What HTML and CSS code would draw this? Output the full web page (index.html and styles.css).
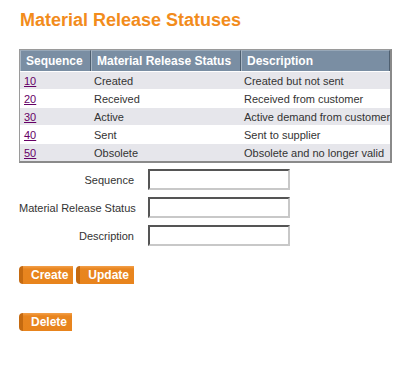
FILE: index.html
```html
<!DOCTYPE html>
<html lang="en">
<head>
  <meta charset="UTF-8">
  <title>Material Release Statuses</title>
  <link rel="stylesheet" href="styles.css">
</head>
<body>

<div class="page">
  <h1 class="title">Material Release Statuses</h1>

  <table class="grid">
    <thead>
      <tr>
        <th class="col-seq">Sequence</th>
        <th class="col-status">Material Release Status</th>
        <th class="col-desc">Description</th>
      </tr>
    </thead>
    <tbody>
      <tr class="odd"><td><a href="#">10</a></td><td>Created</td><td>Created but not sent</td></tr>
      <tr><td><a href="#">20</a></td><td>Received</td><td>Received from customer</td></tr>
      <tr class="odd"><td><a href="#">30</a></td><td>Active</td><td>Active demand from customer</td></tr>
      <tr><td><a href="#">40</a></td><td>Sent</td><td>Sent to supplier</td></tr>
      <tr class="odd"><td><a href="#">50</a></td><td>Obsolete</td><td>Obsolete and no longer valid</td></tr>
    </tbody>
  </table>

  <form class="edit-form">
    <div class="field">
      <label>Sequence</label>
      <input type="text">
    </div>
    <div class="field">
      <label>Material Release Status</label>
      <input type="text">
    </div>
    <div class="field">
      <label>Description</label>
      <input type="text">
    </div>
  </form>

  <div class="actions">
    <button class="btn">Create</button>
    <button class="btn">Update</button>
  </div>

  <div class="actions actions-delete">
    <button class="btn">Delete</button>
  </div>
</div>

</body>
</html>
```

FILE: styles.css
```css
body {
  margin: 0;
  background-color: #fff;
  color: #333;
  font-family: "Liberation Sans", Arial, sans-serif;
  font-size: 11px;
}

.page {
  padding: 10px 0 0 19px;
}

.title {
  margin: 0 0 19px 1px;
  font-size: 18px;
  line-height: 20px;
  font-weight: bold;
  color: #f28c1c;
}

.grid {
  width: 373px;
  table-layout: fixed;
  border-collapse: separate;
  border-spacing: 0;
  border: 1px solid #9a9a9a;
  border-right: 2px solid #8a8a8a;
  border-bottom: 2px solid #8a8a8a;
}

.grid th {
  height: 20px;
  padding: 0 5px;
  text-align: left;
  white-space: nowrap;
  font-size: 12px;
  font-weight: bold;
  color: #fff;
  background-color: #7a8ea3;
  border-left: 1px solid #a8b6c4;
  border-right: 1px solid #4e5f70;
  border-top: 1px solid #98a8b8;
}

.grid th.col-seq { width: 59px; }
.grid th.col-status { width: 138px; }

.grid td {
  height: 17px;
  padding: 0 1px 0 3px;
  white-space: nowrap;
  overflow: hidden;
  color: #333;
  border-top: 1px solid #fff;
}

.grid td:first-child { padding-left: 4px; }

.grid tr.odd td {
  background-color: #e6e6eb;
}

.grid a {
  color: #660066;
}

.edit-form {
  margin-top: 6px;
}

.field {
  display: flex;
  align-items: center;
  height: 21px;
  margin-bottom: 7px;
}

.field label {
  width: 115px;
  flex-shrink: 0;
  white-space: nowrap;
  text-align: right;
  margin-right: 14px;
}

.field input {
  box-sizing: border-box;
  width: 142px;
  height: 21px;
  margin: 0;
  padding: 1px 3px;
  border: 2px solid;
  border-color: #555 #c8c8c8 #c8c8c8 #555;
  background: #fff;
}

.actions {
  display: flex;
  gap: 3px;
  margin-top: 20px;
}

.actions-delete {
  margin-top: 29px;
}

.btn {
  height: 18px;
  padding: 0 5px 0 8px;
  border: none;
  border-left: 4px solid #c56a10;
  border-radius: 4px 0 0 4px;
  background: linear-gradient(#f4a04a 0, #e8851f 3px, #e8841d 100%);
  color: #fff;
  font-family: "Liberation Sans", Arial, sans-serif;
  font-size: 12px;
  font-weight: bold;
  cursor: pointer;
}
```
